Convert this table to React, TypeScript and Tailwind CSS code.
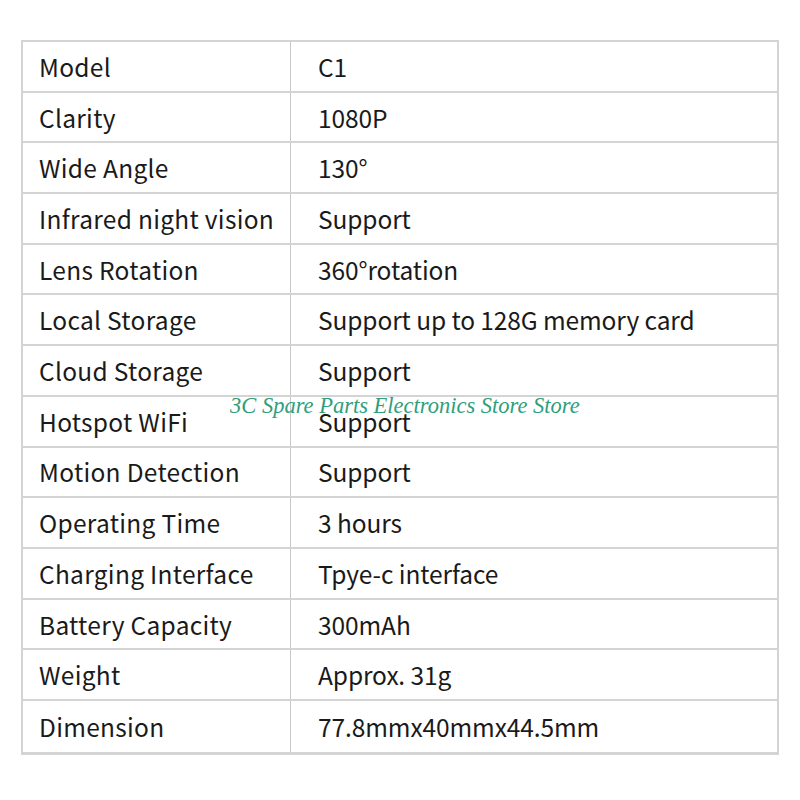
import React from "react";

const rows: [string, string][] = [
  ["Model", "C1"],
  ["Clarity", "1080P"],
  ["Wide Angle", "130°"],
  ["Infrared night vision", "Support"],
  ["Lens Rotation", "360°rotation"],
  ["Local Storage", "Support up to 128G memory card"],
  ["Cloud Storage", "Support"],
  ["Hotspot WiFi", "Support"],
  ["Motion Detection", "Support"],
  ["Operating Time", "3 hours"],
  ["Charging Interface", "Tpye-c interface"],
  ["Battery Capacity", "300mAh"],
  ["Weight", "Approx. 31g"],
  ["Dimension", "77.8mmx40mmx44.5mm"],
];

export default function App() {
  return (
    <div className="w-[800px] h-[800px] bg-white relative pt-[40px] pl-[21px]" style={{ fontFamily: '"Noto Sans CJK SC", "Noto Sans", sans-serif' }}>
      <div className="w-[758px] border-2 border-[#d4d4d4] border-b-[3px]">
        {rows.map(([k, v], i) => (
          <div key={k} className={`flex h-[50.7px] text-[24.5px] text-[#1a1a1a] ${i < rows.length - 1 ? "border-b-2 border-[#d4d4d4]" : ""}`}>
            <div className="w-[268px] pl-[16px] pt-[2px] flex items-center border-r border-[#c8c8c8] tracking-[0.3px]">{k}</div>
            <div className="flex-1 pl-[27px] pt-[2px] flex items-center tracking-[-0.1px]">{v}</div>
          </div>
        ))}
      </div>
      <div
        className="absolute left-[230px] top-[389px] text-[22.5px] italic text-[#2f9e7c] whitespace-nowrap"
        style={{ fontFamily: '"Liberation Serif", serif' }}
      >
        3C Spare Parts Electronics Store Store
      </div>
    </div>
  );
}
